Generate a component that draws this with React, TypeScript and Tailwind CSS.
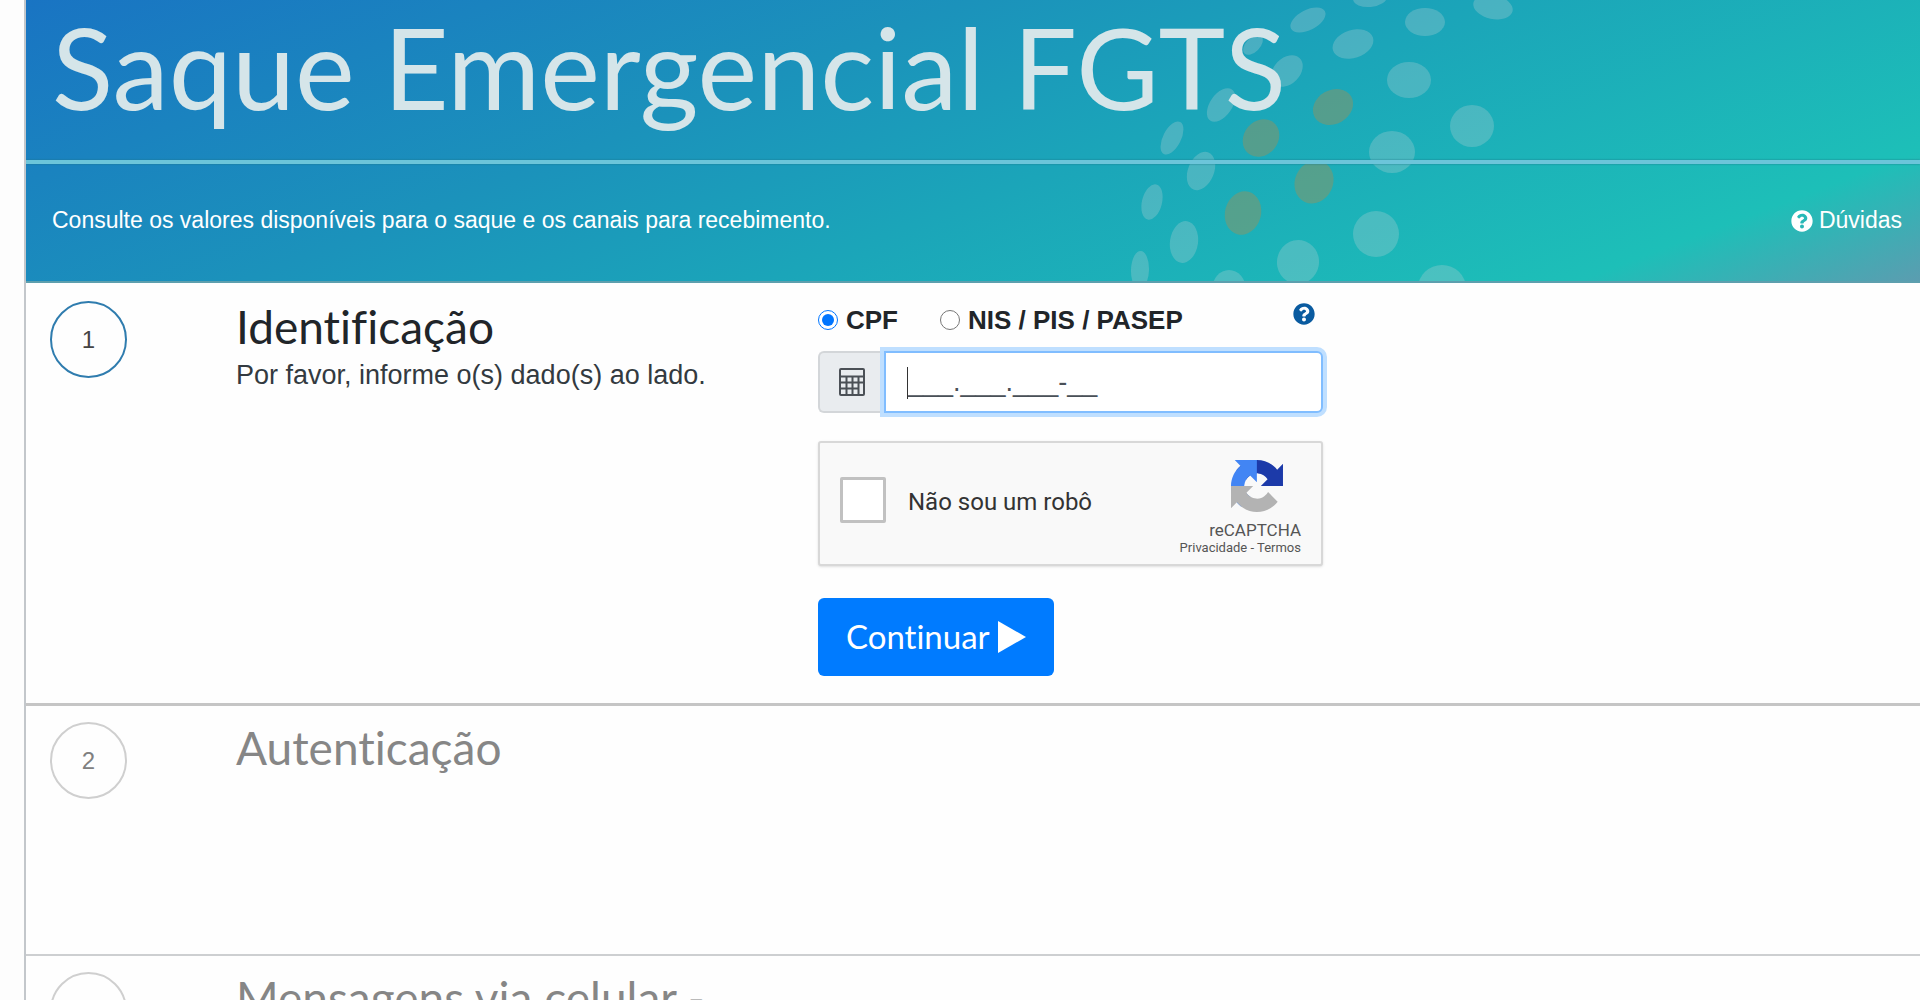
import { useState } from "react";
import type { ReactNode } from "react";
import { FaQuestionCircle } from "react-icons/fa";

type Dot = {
  cx: number;
  cy: number;
  rx: number;
  ry: number;
  angle: number;
  gold?: boolean;
};

const dots: Dot[] = [
  { cx: 270, cy: -2, rx: 17, ry: 9, angle: -5 },
  { cx: 393, cy: 7, rx: 20, ry: 12, angle: 12 },
  { cx: 208, cy: 20, rx: 19, ry: 10, angle: -27 },
  { cx: 325, cy: 22, rx: 20, ry: 14, angle: 0 },
  { cx: 253, cy: 44, rx: 21, ry: 14, angle: -18 },
  { cx: 153, cy: 45, rx: 12, ry: 7, angle: -45 },
  { cx: 187, cy: 71, rx: 18, ry: 13, angle: -45 },
  { cx: 309, cy: 80, rx: 22, ry: 18, angle: 0 },
  { cx: 121, cy: 105, rx: 19, ry: 11, angle: -55 },
  { cx: 233, cy: 107, rx: 21, ry: 17, angle: -30, gold: true },
  { cx: 372, cy: 126, rx: 22, ry: 21, angle: 0 },
  { cx: 72, cy: 138, rx: 18, ry: 9, angle: -63 },
  { cx: 161, cy: 138, rx: 20, ry: 17, angle: -50, gold: true },
  { cx: 292, cy: 152, rx: 23, ry: 21, angle: 0 },
  { cx: 101, cy: 171, rx: 20, ry: 13, angle: -68 },
  { cx: 214, cy: 182, rx: 22, ry: 19, angle: -65, gold: true },
  { cx: 52, cy: 202, rx: 18, ry: 10, angle: -76 },
  { cx: 143, cy: 213, rx: 22, ry: 18, angle: -75, gold: true },
  { cx: 276, cy: 234, rx: 23, ry: 23, angle: 0 },
  { cx: 84, cy: 242, rx: 21, ry: 14, angle: -82 },
  { cx: 198, cy: 262, rx: 22, ry: 21, angle: -80 },
  { cx: 40, cy: 270, rx: 19, ry: 9, angle: -88 },
  { cx: 129, cy: 290, rx: 17, ry: 20, angle: 0 },
  { cx: 342, cy: 288, rx: 24, ry: 23, angle: 0 },
];

function HeaderDots() {
  return (
    <svg
      aria-hidden="true"
      viewBox="0 0 500 281"
      width="500"
      height="281"
      className="absolute top-0 left-[1074px]"
    >
      {dots.map((dot) => (
        <ellipse
          key={`${dot.cx}-${dot.cy}`}
          cx={dot.cx}
          cy={dot.cy}
          rx={dot.rx}
          ry={dot.ry}
          transform={`rotate(${dot.angle} ${dot.cx} ${dot.cy})`}
          fill={dot.gold ? "#a58f50" : "#b5cfd4"}
          fillOpacity={dot.gold ? 0.42 : 0.3}
        />
      ))}
    </svg>
  );
}

function CalculatorIcon() {
  return (
    <svg aria-hidden="true" viewBox="0 0 26 28" width="26" height="28" fill="none" stroke="#4b5056">
      <rect x="1" y="1" width="24" height="26" rx="1" strokeWidth="2" />
      <path d="M1 8.5h24" strokeWidth="2" />
      <path d="M2 14.5h23M2 20.5h18M7.5 9v18M13.5 9v18M19.5 9v18" strokeWidth="2" />
    </svg>
  );
}

function RecaptchaLogo() {
  return (
    <svg aria-hidden="true" viewBox="0 0 64 64" width="52" height="52">
      <path
        fill="#1c3aa9"
        d="M64 31.955l-.033-1.37V4.687l-7.16 7.16C50.948 4.674 42.033.093 32.05.093c-10.4 0-19.622 4.96-25.458 12.64l11.736 11.86a15.55 15.55 0 0 1 4.754-5.334c2.05-1.6 4.952-2.906 8.968-2.906.485 0 .86.057 1.135.163 4.976.393 9.288 3.14 11.828 7.124l-8.307 8.307L64 31.953"
      />
      <path
        fill="#4285f4"
        d="M31.862.094l-1.37.033H4.594l7.16 7.16C4.58 13.147 0 22.06 0 32.046c0 10.4 4.96 19.622 12.64 25.458L24.5 45.768a15.55 15.55 0 0 1-5.334-4.754c-1.6-2.05-2.906-4.952-2.906-8.968 0-.485.057-.86.163-1.135.393-4.976 3.14-9.288 7.124-11.828l8.307 8.307L31.86.095"
      />
      <path
        fill="#b3b3b3"
        d="M.001 32.045l.033 1.37v25.898l7.16-7.16c5.86 7.173 14.774 11.754 24.76 11.754 10.4 0 19.622-4.96 25.458-12.64l-11.736-11.86a15.55 15.55 0 0 1-4.754 5.334c-2.05 1.6-4.952 2.906-8.968 2.906-.485 0-.86-.057-1.135-.163-4.976-.393-9.288-3.14-11.828-7.124l8.307-8.307c-10.522.04-22.4.066-27.295-.005"
      />
    </svg>
  );
}

type StepProps = {
  number: number;
  title: string;
  active?: boolean;
  description?: string;
  className: string;
  children?: ReactNode;
};

function Step({ number, title, active = false, description, className, children }: StepProps) {
  return (
    <section className={`flex items-start px-6 ${className}`}>
      <div
        className={
          active
            ? "flex size-[77px] shrink-0 items-center justify-center rounded-full border-2 border-[#2f7cae] text-2xl text-[#444]"
            : "flex size-[77px] shrink-0 items-center justify-center rounded-full border-2 border-[#cfcfcf] text-2xl text-[#808080]"
        }
      >
        {number}
      </div>
      <div className="ml-[109px] w-[582px] shrink-0">
        <h2
          className={
            active
              ? "font-['Lato'] text-[46px] leading-[52px] text-[#212529] [font-variant-ligatures:none]"
              : "font-['Lato'] text-[46px] leading-[52px] text-[#868686] [font-variant-ligatures:none]"
          }
        >
          {title}
        </h2>
        {description && <p className="mt-1.5 text-[27px] leading-8 text-[#333a40]">{description}</p>}
      </div>
      {children}
    </section>
  );
}

export default function App() {
  const [documentType, setDocumentType] = useState("cpf");
  const [documentNumber, setDocumentNumber] = useState("___.___.___-__");

  return (
    <div className="h-screen overflow-hidden bg-[#fdfdfd] pl-6 font-['Liberation_Sans',sans-serif]">
      <main className="border-l-2 border-[#c3c7cb] bg-[#fefefe]">
        <header className="relative overflow-hidden border-b-2 border-[#5d9fae] bg-[linear-gradient(159deg,#1974c3_0%,#1b92bb_36%,#1ba5b9_56%,#1dbfb8_87%,#5b9db0_100%)]">
          <HeaderDots />
          <div className="relative">
            <h1 className="pb-7 pl-[26px] font-['Lato'] text-[113px] leading-[132px] whitespace-nowrap text-[#d5e5e9]">
              Saque Emergencial FGTS
            </h1>
            <hr className="h-1 border-0 bg-[#6cc5da] shadow-[0_0_2px_#1b7186]" />
            <div className="flex h-[117px] items-center justify-between pr-[18px] pb-1 pl-[26px] text-[23px] text-white">
              <p>Consulte os valores disponíveis para o saque e os canais para recebimento.</p>
              <a href="#duvidas" className="flex items-center gap-1.5">
                <FaQuestionCircle className="size-[22px]" />
                Dúvidas
              </a>
            </div>
          </div>
        </header>

        <Step
          number={1}
          title="Identificação"
          description="Por favor, informe o(s) dado(s) ao lado."
          active
          className="min-h-[423px] border-b-3 border-[#c5c5c5] pt-[18px]"
        >
          <form className="w-[505px]" onSubmit={(event) => event.preventDefault()}>
            <div className="mb-3 flex h-[38px] items-center text-[26px] font-bold text-[#212529]">
              <label className="flex items-center gap-2">
                <input
                  type="radio"
                  name="documentType"
                  value="cpf"
                  checked={documentType === "cpf"}
                  onChange={() => setDocumentType("cpf")}
                  className="size-5"
                />
                CPF
              </label>
              <label className="ml-[42px] flex items-center gap-2">
                <input
                  type="radio"
                  name="documentType"
                  value="nis"
                  checked={documentType === "nis"}
                  onChange={() => setDocumentType("nis")}
                  className="size-5"
                />
                NIS / PIS / PASEP
              </label>
              <button type="button" aria-label="Ajuda" className="mr-2 mb-3 ml-auto text-[#0a5ba0]">
                <FaQuestionCircle className="size-[22px]" />
              </button>
            </div>

            <div className="flex h-[62px]">
              <label
                htmlFor="documentNumber"
                aria-label="Documento"
                className="flex w-[66px] shrink-0 items-center justify-center rounded-l-md border-2 border-r-0 border-[#d3d6d9] bg-[#e9ecef]"
              >
                <CalculatorIcon />
              </label>
              <div className="relative flex-1">
                <input
                  id="documentNumber"
                  value={documentNumber}
                  onChange={(event) => setDocumentNumber(event.target.value)}
                  className="h-full w-full rounded-r-md border-2 border-[#80bdff] bg-white px-[22px] text-[27px] text-[#495057] ring-4 ring-[#bfdfff] outline-none"
                />
                <span className="absolute top-4 left-[23px] h-8 w-px bg-[#333]" />
              </div>
            </div>

            <div className="mt-7 flex h-[125px] items-center rounded-[3px] border-2 border-[#d8d8d8] bg-[#f9f9f9] px-5 pt-2 font-['Roboto'] shadow-sm">
              <input
                id="notRobot"
                type="checkbox"
                className="mb-4 size-[46px] shrink-0 appearance-none rounded-xs border-3 border-[#c1c1c1] bg-white"
              />
              <label htmlFor="notRobot" className="mb-3 ml-[22px] text-2xl text-[#333]">
                Não sou um robô
              </label>
              <div className="ml-auto flex flex-col items-end text-[#555]">
                <div className="mr-[18px]">
                  <RecaptchaLogo />
                </div>
                <p className="mt-2 text-[17px] leading-5">reCAPTCHA</p>
                <p className="text-[13px] leading-4">
                  <a href="#privacidade">Privacidade</a> - <a href="#termos">Termos</a>
                </p>
              </div>
            </div>

            <button
              type="submit"
              className="mt-8 flex h-[78px] items-center gap-2 rounded-md bg-[#007bff] px-7 font-['Lato'] text-[33px] text-white [font-variant-ligatures:none]"
            >
              Continuar
              <svg aria-hidden="true" viewBox="0 0 28 32" width="28" height="32" fill="currentColor">
                <path d="M0 0L28 16L0 32Z" />
              </svg>
            </button>
          </form>
        </Step>

        <Step number={2} title="Autenticação" className="min-h-[250px] border-b-2 border-[#cdcfd1] pt-4" />
        <Step number={3} title="Mensagens via celular -" className="min-h-[250px] pt-4" />
      </main>
    </div>
  );
}
